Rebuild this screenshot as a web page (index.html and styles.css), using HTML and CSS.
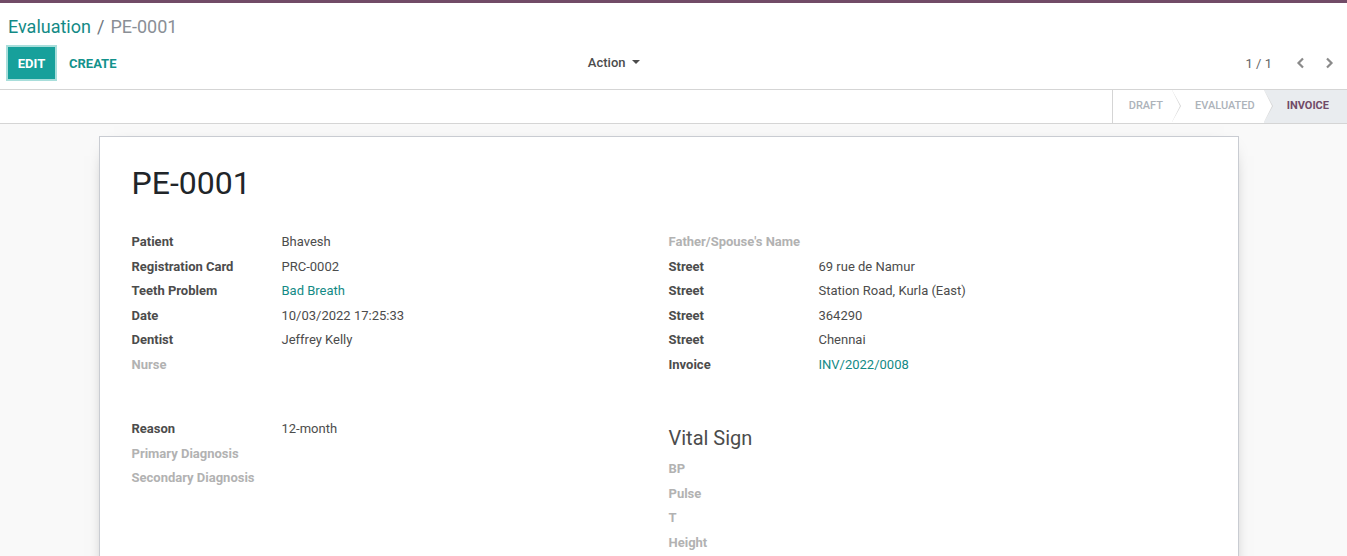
FILE: index.html
```html
<!DOCTYPE html>
<html>
<head>
<meta charset="utf-8">
<link rel="stylesheet" href="styles.css">
</head>
<body>
<div class="app">
  <header class="cp">
    <div class="cp-top">
      <a class="crumb-link">Evaluation</a><span class="crumb-sep">/</span><span class="crumb-active">PE-0001</span>
    </div>
    <div class="cp-bottom">
      <div class="cp-left">
        <div class="btns">
          <button class="btn btn-primary">EDIT</button>
          <button class="btn btn-secondary">CREATE</button>
        </div>
        <div class="action">Action <span class="caret"></span></div>
      </div>
      <div class="cp-right">
        <span class="pager-val">1 / 1</span>
        <span class="pager-btn"><svg width="10" height="12" viewBox="0 0 10 12"><path d="M7 1.5 L2.5 6 L7 10.5" fill="none" stroke="#8a8a8a" stroke-width="2.2"/></svg></span>
        <span class="pager-btn"><svg width="10" height="12" viewBox="0 0 10 12"><path d="M3 1.5 L7.5 6 L3 10.5" fill="none" stroke="#8a8a8a" stroke-width="2.2"/></svg></span>
      </div>
    </div>
  </header>
  <div class="statusbar">
    <div class="sb-buttons">
      <span class="sb-btn">Draft</span>
      <span class="sb-btn">Evaluated</span>
      <span class="sb-btn sb-active">Invoice</span>
    </div>
  </div>
  <main class="content">
    <div class="sheet">
      <h1 class="title">PE-0001</h1>
      <div class="group">
        <div class="col">
          <div class="row"><span class="lbl">Patient</span><span class="val">Bhavesh</span></div>
          <div class="row"><span class="lbl">Registration Card</span><span class="val">PRC-0002</span></div>
          <div class="row"><span class="lbl">Teeth Problem</span><span class="val link">Bad Breath</span></div>
          <div class="row"><span class="lbl">Date</span><span class="val">10/03/2022 17:25:33</span></div>
          <div class="row"><span class="lbl">Dentist</span><span class="val">Jeffrey Kelly</span></div>
          <div class="row"><span class="lbl empty">Nurse</span><span class="val"></span></div>
        </div>
        <div class="col">
          <div class="row"><span class="lbl empty">Father/Spouse's Name</span><span class="val"></span></div>
          <div class="row"><span class="lbl">Street</span><span class="val">69 rue de Namur</span></div>
          <div class="row"><span class="lbl">Street</span><span class="val">Station Road, Kurla (East)</span></div>
          <div class="row"><span class="lbl">Street</span><span class="val">364290</span></div>
          <div class="row"><span class="lbl">Street</span><span class="val">Chennai</span></div>
          <div class="row"><span class="lbl">Invoice</span><span class="val link">INV/2022/0008</span></div>
        </div>
      </div>
      <div class="group group2">
        <div class="col">
          <div class="row"><span class="lbl">Reason</span><span class="val">12-month</span></div>
          <div class="row"><span class="lbl empty">Primary Diagnosis</span><span class="val"></span></div>
          <div class="row"><span class="lbl empty">Secondary Diagnosis</span><span class="val"></span></div>
        </div>
        <div class="col">
          <div class="separator">Vital Sign</div>
          <div class="row"><span class="lbl empty">BP</span><span class="val"></span></div>
          <div class="row"><span class="lbl empty">Pulse</span><span class="val"></span></div>
          <div class="row"><span class="lbl empty">T</span><span class="val"></span></div>
          <div class="row"><span class="lbl empty">Height</span><span class="val"></span></div>
        </div>
      </div>
    </div>
  </main>
</div>
</body>
</html>
```

FILE: styles.css
```css
html, body {
  margin: 0;
  padding: 0;
  height: 100%;
  overflow: hidden;
}
body {
  font-family: Roboto, "Noto Sans", sans-serif;
  font-size: 13px;
  color: #4c4c4c;
  background: #f9f9f9;
}
.app {
  display: flex;
  flex-direction: column;
  height: 100%;
  border-top: 3px solid #714b67;
  box-sizing: border-box;
}
.cp {
  background: #fff;
  border-bottom: 1px solid #d5d5d5;
}
.cp-top {
  padding: 10px 8px 0;
  line-height: 28px;
  font-size: 18px;
}
.crumb-link {
  color: #138a86;
}
.crumb-sep {
  color: #6c757d;
  padding: 0 6px;
}
.crumb-active {
  color: #8a8f96;
}
.cp-bottom {
  display: flex;
  padding: 6px 0 10px 8px;
}
.cp-left {
  width: 50%;
  display: flex;
  align-items: center;
  justify-content: space-between;
  padding-right: 26px;
  box-sizing: border-box;
}
.btns {
  display: flex;
  align-items: center;
}
.btn {
  font-family: Roboto, sans-serif;
  font-size: 13px;
  font-weight: 700;
  height: 32px;
  border: none;
  padding: 0 10px;
  cursor: pointer;
  text-transform: uppercase;
}
.btn-primary {
  background: #17a09b;
  color: #fff;
  box-shadow: 0 0 0 2px #a8dedb;
  width: 47px;
  padding: 0;
}
.btn-secondary {
  background: transparent;
  color: #13928c;
  margin-left: 8px;
  padding: 0 6px;
}
.action {
  padding: 0 12px;
  line-height: 32px;
  color: #4c4c4c;
  font-weight: 500;
  display: flex;
  align-items: center;
}
.caret {
  display: inline-block;
  width: 0;
  height: 0;
  border-left: 4px solid transparent;
  border-right: 4px solid transparent;
  border-top: 4px solid #4c4c4c;
  margin-left: 6px;
  margin-top: -2px;
}
.cp-right {
  width: 50%;
  display: flex;
  align-items: center;
  justify-content: flex-end;
  padding-right: 4px;
  box-sizing: border-box;
}
.pager-val {
  color: #666;
  margin-right: 15px;
}
.pager-btn {
  display: flex;
  width: 28px;
  justify-content: center;
}
.statusbar {
  background: #fff;
  border-bottom: 1px solid #d5d5d5;
  display: flex;
  justify-content: flex-end;
  height: 33px;
}
.sb-buttons {
  display: flex;
  border-left: 1px solid #d5d5d5;
}
.sb-btn {
  position: relative;
  padding: 0 9px 0 23px;
  line-height: 32px;
  font-size: 11px;
  font-weight: 500;
  color: #adb3ba;
  text-transform: uppercase;
  background: #fff;
}
.sb-btn:first-child {
  padding-left: 16px;
}
.sb-btn::before,
.sb-btn::after {
  content: "";
  position: absolute;
  top: 0;
  border-top: 16.5px solid transparent;
  border-bottom: 16.5px solid transparent;
}
.sb-btn::before {
  right: -9px;
  border-left: 9px solid #d5d5d5;
  z-index: 1;
}
.sb-btn::after {
  right: -8px;
  border-left: 8px solid #fff;
  z-index: 2;
}
.sb-btn.sb-active {
  background: #e9ecef;
  color: #714b67;
  font-weight: 700;
  padding-right: 18px;
}
.sb-btn.sb-active::before,
.sb-btn.sb-active::after {
  display: none;
}
.content {
  flex: 1;
  overflow: hidden;
  padding: 12px 10px 0 0;
}
.sheet {
  width: 1140px;
  box-sizing: border-box;
  margin: 0 auto;
  background: #fff;
  border: 1px solid #c9ccd2;
  box-shadow: 0 5px 20px -15px #000;
  padding: 27px 32px 80px;
  min-height: 600px;
}
.title {
  margin: 0;
  font-size: 32px;
  line-height: 38px;
  font-weight: 400;
  color: #212529;
}
.group {
  display: grid;
  grid-template-columns: 1fr 1fr;
  margin-top: 28px;
}
.group2 {
  margin-top: 40px;
}
.row {
  display: grid;
  grid-template-columns: 150px 1fr;
  line-height: 24.5px;
  height: 24.5px;
}
.lbl {
  font-weight: 700;
  color: #4c4c4c;
}
.lbl.empty {
  color: #b2b2b2;
}
.val {
  color: #4c4c4c;
}
.val.link {
  color: #138a86;
}
.separator {
  font-size: 20px;
  line-height: 30px;
  margin-top: 6px;
  margin-bottom: 4px;
  color: #4c4c4c;
}
```
